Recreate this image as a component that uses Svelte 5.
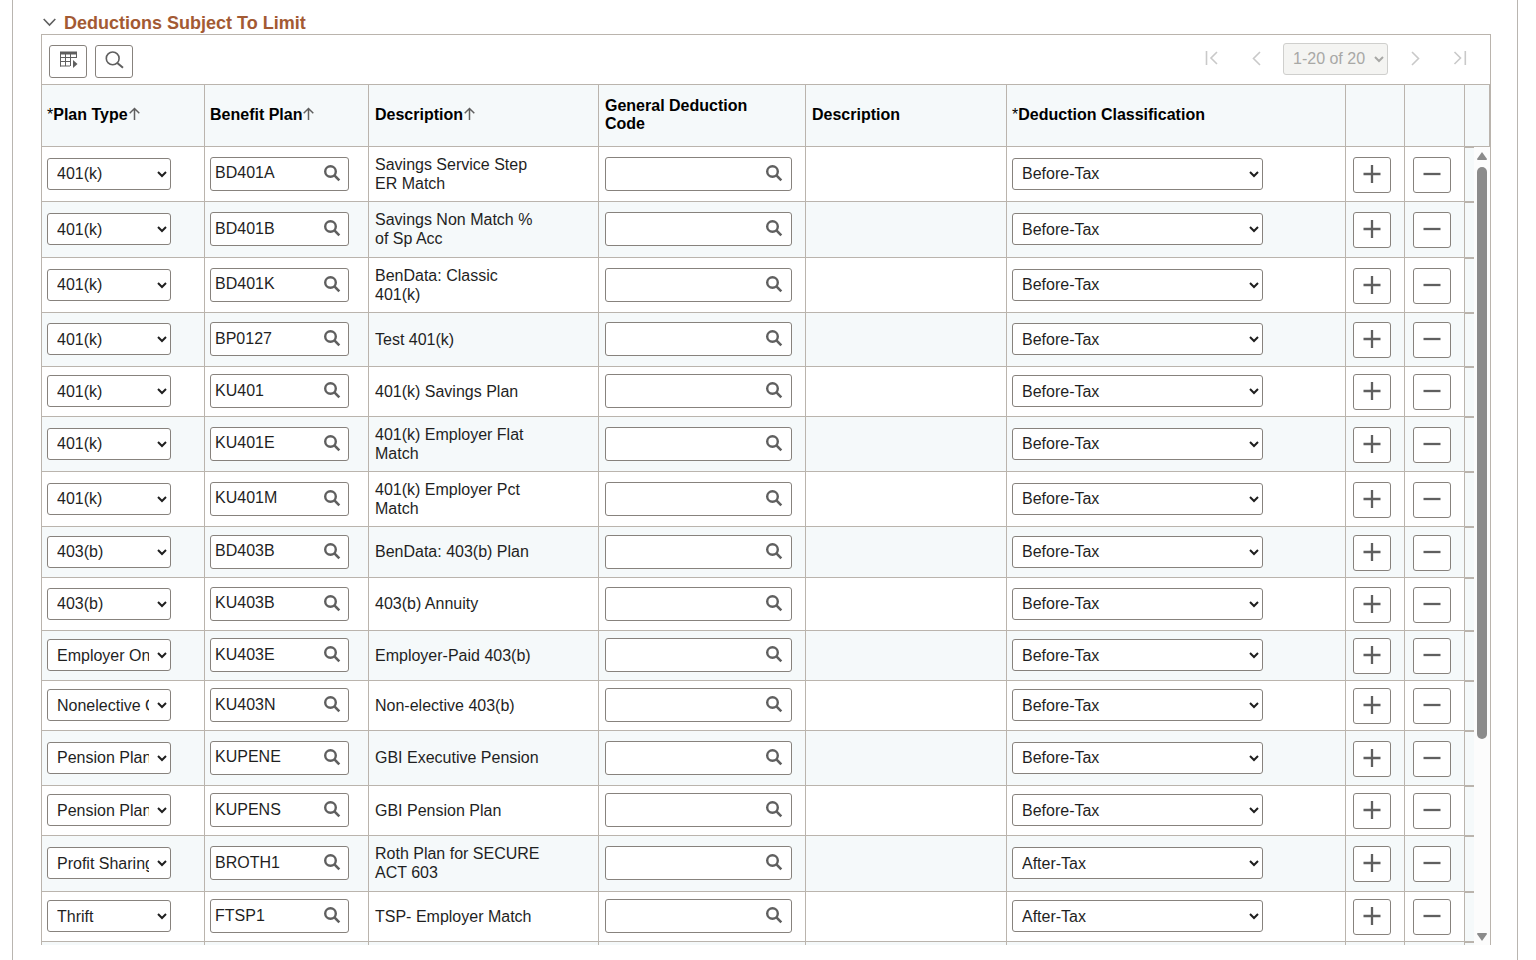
<script lang="ts">
    interface DeductionRow {
        planType: string;
        plan: string;
        description: string;
        taxClass: string;
        height: number;
    }

    function row(planType: string, plan: string, description: string, height: number, taxClass = "Before-Tax"): DeductionRow {
        return { planType, plan, description, height, taxClass };
    }

    let rows = $state<DeductionRow[]>([
        row("401(k)", "BD401A", "Savings Service Step ER Match", 55),
        row("401(k)", "BD401B", "Savings Non Match % of Sp Acc", 56),
        row("401(k)", "BD401K", "BenData: Classic 401(k)", 55),
        row("401(k)", "BP0127", "Test 401(k)", 54),
        row("401(k)", "KU401", "401(k) Savings Plan", 50),
        row("401(k)", "KU401E", "401(k) Employer Flat Match", 55),
        row("401(k)", "KU401M", "401(k) Employer Pct Match", 55),
        row("403(b)", "BD403B", "BenData: 403(b) Plan", 51),
        row("403(b)", "KU403B", "403(b) Annuity", 53),
        row("Employer Only 403(b)", "KU403E", "Employer-Paid 403(b)", 50),
        row("Nonelective Contributions", "KU403N", "Non-elective 403(b)", 50),
        row("Pension Plan 1", "KUPENE", "GBI Executive Pension", 55),
        row("Pension Plan 1", "KUPENS", "GBI Pension Plan", 50),
        row("Profit Sharing", "BROTH1", "Roth Plan for SECURE ACT 603", 56, "After-Tax"),
        row("Thrift", "FTSP1", "TSP- Employer Match", 50, "After-Tax"),
        row("Thrift", "", "", 50, "After-Tax"),
    ]);

    const planTypes = [
        "401(k)",
        "403(b)",
        "Employer Only 403(b)",
        "Nonelective Contributions",
        "Pension Plan 1",
        "Profit Sharing",
        "Thrift",
    ];
    const taxClasses = ["Before-Tax", "After-Tax"];
</script>

{#snippet lookupIcon()}
    <svg width="18" height="18" viewBox="0 0 18 18" fill="none" stroke="#5f5f5f" stroke-width="2.4" aria-hidden="true">
        <circle cx="7.5" cy="7.5" r="5.3" />
        <path d="M11.2 11.2L16.3 16.3" stroke-width="2.6" />
    </svg>
{/snippet}

{#snippet sortArrow()}
    <svg class="sort" width="12" height="13" viewBox="0 0 12 13" fill="none" stroke="#5f5f5f" stroke-width="1.5" aria-hidden="true">
        <path d="M5.5 13V1.5M0.7 6.2L5.5 1.5L10.3 6.2" />
    </svg>
{/snippet}

<main class="panel">
    <h2>
        <button class="toggle" aria-label="Collapse section">
            <svg width="14" height="9" viewBox="0 0 14 9" fill="none" stroke="#5f5f5f" stroke-width="1.6">
                <path d="M0.7 1L6.5 7L12.3 1" />
            </svg>
        </button>
        Deductions Subject To Limit
    </h2>

    <section class="grid">
        <div class="toolbar">
            <button class="tool" aria-label="Grid actions">
                <svg width="20" height="18" viewBox="-1 0 20 18" fill="none" stroke="#5f5f5f">
                    <path d="M1 2H18" stroke-width="3" />
                    <path d="M1.5 1V15.5M6.5 2V15M11.5 2V15M17.5 2V7M1 6.5H18M1 10.5H11M1 15H11" />
                    <path d="M14 9L18.5 13L14 17Z" fill="#5f5f5f" stroke="none" />
                </svg>
            </button>
            <button class="tool" aria-label="Find">
                <svg width="20" height="18" viewBox="0 0 20 18" fill="none" stroke="#5f5f5f" stroke-width="1.6">
                    <circle cx="8.7" cy="7.4" r="6.4" />
                    <path d="M13.3 12L19 16.8" stroke-width="2" />
                </svg>
            </button>

            <nav class="pager" aria-label="Rows">
                <button disabled aria-label="First">
                    <svg width="18" height="16" viewBox="0 0 18 16"><path d="M4.5 1V15M15 2L9 8L15 14" /></svg>
                </button>
                <button disabled aria-label="Previous">
                    <svg width="18" height="16" viewBox="0 0 18 16"><path d="M13 2L6.5 8.5L13 15" /></svg>
                </button>
                <select disabled aria-label="Row range"><option>1-20 of 20</option></select>
                <button disabled aria-label="Next">
                    <svg width="18" height="16" viewBox="0 0 18 16"><path d="M6 2L12.5 8.5L6 15" /></svg>
                </button>
                <button disabled aria-label="Last">
                    <svg width="18" height="16" viewBox="0 0 18 16"><path d="M14.3 1V15M3.5 2L9.5 8L3.5 14" /></svg>
                </button>
            </nav>
        </div>

        <div class="viewport">
            <table>
                <colgroup>
                    <col class="c-type" />
                    <col class="c-plan" />
                    <col class="c-descr" />
                    <col class="c-code" />
                    <col class="c-code-descr" />
                    <col />
                    <col class="c-add" />
                    <col class="c-remove" />
                    <col class="c-end" />
                </colgroup>
                <thead>
                    <tr>
                        <th><span class="required">*</span>Plan Type{@render sortArrow()}</th>
                        <th>Benefit Plan{@render sortArrow()}</th>
                        <th class="indent">Description{@render sortArrow()}</th>
                        <th class="indent"><div class="wrap">General Deduction Code</div></th>
                        <th class="indent">Description</th>
                        <th><span class="required">*</span>Deduction Classification</th>
                        <th></th>
                        <th></th>
                        <th class="end"></th>
                    </tr>
                </thead>
                <tbody>
                    {#each rows as item}
                        <tr style="height: {item.height}px">
                            <td>
                                <select class="type" aria-label="Plan Type" bind:value={item.planType}>
                                    {#each planTypes as name}
                                        <option value={name}>{name}</option>
                                    {/each}
                                </select>
                            </td>
                            <td>
                                <div class="lookup plan">
                                    <input type="text" aria-label="Benefit Plan" bind:value={item.plan} />
                                    <button aria-label="Look up Benefit Plan">{@render lookupIcon()}</button>
                                </div>
                            </td>
                            <td class="indent"><div class="wrap">{item.description}</div></td>
                            <td class="indent">
                                <div class="lookup code">
                                    <input type="text" aria-label="General Deduction Code" />
                                    <button aria-label="Look up General Deduction Code">{@render lookupIcon()}</button>
                                </div>
                            </td>
                            <td></td>
                            <td>
                                <select class="tax" aria-label="Deduction Classification" bind:value={item.taxClass}>
                                    {#each taxClasses as name}
                                        <option value={name}>{name}</option>
                                    {/each}
                                </select>
                            </td>
                            <td class="action">
                                <button aria-label="Add row">
                                    <svg width="18" height="18" viewBox="0 0 18 18"><path d="M0.5 9H17.5M9 0V18" /></svg>
                                </button>
                            </td>
                            <td class="action remove">
                                <button aria-label="Delete row">
                                    <svg width="18" height="18" viewBox="0 0 18 18"><path d="M0.5 9H17.5" /></svg>
                                </button>
                            </td>
                            <td class="end"></td>
                        </tr>
                    {/each}
                </tbody>
            </table>

            <div class="rail">
                <svg width="10" height="8" viewBox="0 0 10 8"><path d="M5 0L10 7Q10 8 9 8H1Q0 8 0 7Z" fill="#8b8b8b" /></svg>
                <div class="track"><div class="thumb"></div></div>
                <svg width="10" height="8" viewBox="0 0 10 8"><path d="M5 8L10 1Q10 0 9 0H1Q0 0 0 1Z" fill="#8b8b8b" /></svg>
            </div>
        </div>
    </section>
</main>

<style>
    :global(body) {
        margin: 0;
        background: #fff;
        overflow: hidden;
    }
    .panel {
        box-sizing: border-box;
        min-height: 100vh;
        margin: 0 18px 0 12px;
        padding: 12px 26px 0 28px;
        border: solid #b9b5b0;
        border-width: 0 1px;
        font-family: "Liberation Sans", Arial, sans-serif;
        font-size: 16px;
        color: #1f1f1f;
    }
    h2 {
        display: flex;
        align-items: center;
        gap: 7px;
        margin: 0;
        padding-left: 2px;
        font-size: 18px;
        line-height: 22px;
        color: #a35a33;
    }
    button {
        display: flex;
        align-items: center;
        justify-content: center;
        padding: 0;
        border: 0;
        background: none;
    }
    .toggle {
        width: 14px;
        padding-bottom: 2px;
    }
    .grid {
        border: 1px solid #bab4ad;
        border-bottom: 0;
    }
    .toolbar {
        display: flex;
        align-items: center;
        gap: 8px;
        height: 49px;
        padding-left: 7px;
    }
    .tool {
        width: 38px;
        height: 33px;
        margin-top: 4px;
        padding-bottom: 4px;
        border: 1px solid #87827d;
        border-radius: 3px;
    }
    .pager {
        display: flex;
        align-items: center;
        gap: 18px;
        margin-left: auto;
        padding: 0 21px 2px 0;
    }
    .pager button {
        padding-bottom: 2px;
    }
    .pager button:first-child {
        margin-right: 9px;
    }
    .pager button:last-child {
        margin-left: 9px;
    }
    .pager svg {
        fill: none;
        stroke: #c9c9c9;
        stroke-width: 1.6;
    }
    select {
        box-sizing: border-box;
        display: block;
        height: 32px;
        padding: 0 5px;
        border: 1px solid #87827d;
        border-radius: 3px;
        background-color: #fff;
        font: inherit;
        color: #1f1f1f;
    }
    .pager select {
        width: 105px;
        padding-right: 0;
        border-color: #cfcfcd;
        background-color: #f4f4f2;
        color: #a8a8a6;
        opacity: 1;
    }
    .type {
        width: 124px;
    }
    .tax {
        width: 251px;
    }
    .viewport {
        position: relative;
        max-height: calc(100vh - 99px);
        overflow: hidden;
    }
    table {
        width: 100%;
        table-layout: fixed;
        border-collapse: separate;
        border-spacing: 0;
        border-top: 1px solid #bab4ad;
    }
    .c-type {
        width: 163px;
    }
    .c-plan {
        width: 164px;
    }
    .c-descr {
        width: 230px;
    }
    .c-code {
        width: 207px;
    }
    .c-code-descr {
        width: 201px;
    }
    .c-add {
        width: 59px;
    }
    .c-remove {
        width: 60px;
    }
    .c-end {
        width: 25px;
    }
    th,
    td {
        box-sizing: border-box;
        padding: 0 0 1px 5px;
        border: solid #bab4ad;
        border-width: 0 1px 1px 0;
        text-align: left;
        vertical-align: middle;
    }
    th {
        height: 62px;
        background: #f5f9fa;
        line-height: 18px;
        color: #000;
    }
    td {
        line-height: 19px;
    }
    .indent {
        padding-left: 6px;
    }
    .required {
        font-weight: normal;
    }
    .sort {
        margin-left: 1px;
    }
    .wrap {
        max-width: 170px;
    }
    tbody tr:nth-child(even),
    td.end {
        background: #f5f9fa;
    }
    td.end {
        border-top-width: 1px;
        border-right: 0;
    }
    .lookup {
        box-sizing: border-box;
        display: flex;
        height: 34px;
        padding: 0 7px 2px 4px;
        border: 1px solid #87827d;
        border-radius: 3px;
        background: #fff;
    }
    .plan {
        width: 139px;
    }
    .code {
        width: 187px;
        padding-right: 8px;
    }
    .lookup input {
        flex: 1;
        min-width: 0;
        padding: 0;
        border: 0;
        background: none;
        font: inherit;
        color: inherit;
    }
    td.action {
        padding: 1px 0 0 7px;
    }
    td.remove {
        padding-left: 8px;
    }
    .action button {
        width: 38px;
        height: 36px;
        padding-bottom: 2px;
        border: 1px solid #87827d;
        border-radius: 3px;
        background: #fff;
    }
    .action path {
        stroke: #5f5f5f;
        stroke-width: 2.3;
    }
    /* covers the right part of the end column, below the header */
    .rail {
        position: absolute;
        top: 63px;
        right: 0;
        bottom: 0;
        box-sizing: border-box;
        display: flex;
        flex-direction: column;
        align-items: center;
        gap: 7px;
        width: 16px;
        padding: 5px 0 4px;
        background: #fcfcfc;
    }
    .track {
        flex: 1;
    }
    .thumb {
        width: 10px;
        height: 75.4%;
        border-radius: 5px;
        background: #8b8b8b;
    }
</style>
